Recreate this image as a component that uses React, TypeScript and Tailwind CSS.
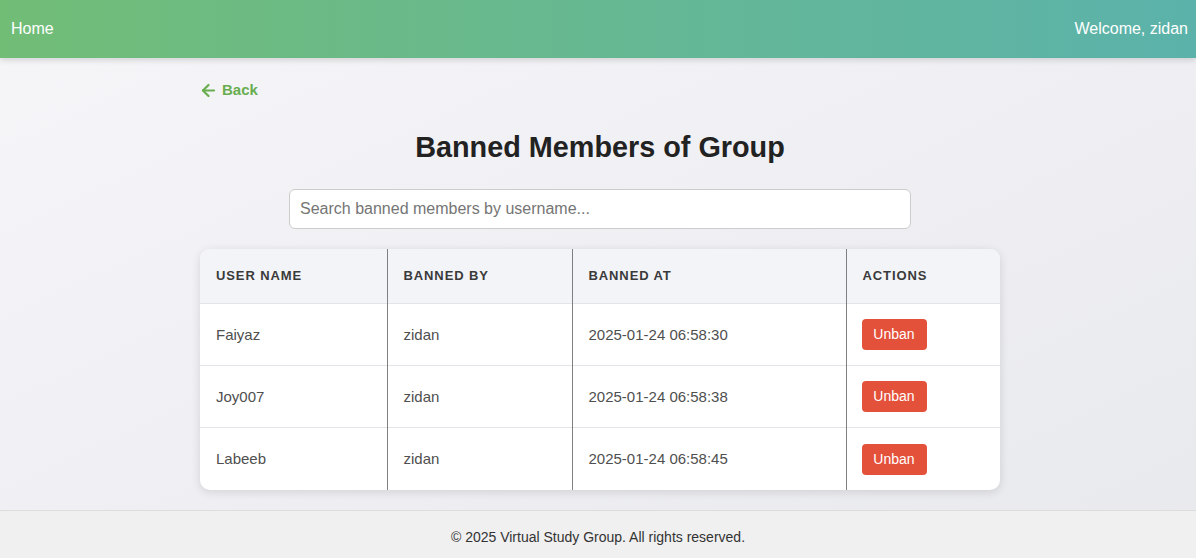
import { ArrowLeft } from 'lucide-react';

const members = [
  { user: 'Faiyaz', by: 'zidan', at: '2025-01-24 06:58:30' },
  { user: 'Joy007', by: 'zidan', at: '2025-01-24 06:58:38' },
  { user: 'Labeeb', by: 'zidan', at: '2025-01-24 06:58:45' },
];

export default function App() {
  return (
    <div className="flex min-h-[558px] flex-col bg-gradient-to-br from-[#f6f6f9] to-[#e8e9ed] font-['Liberation_Sans',Arial,sans-serif] text-[#333]">
      {/* Top bar */}
      <header className="flex h-[58px] items-center justify-between bg-gradient-to-r from-[#71bd76] to-[#5bb2aa] pl-[11px] pr-[8px] text-[16px] text-white shadow-[0_2px_6px_rgba(0,0,0,0.15)]">
        <span>Home</span>
        <span>Welcome, zidan</span>
      </header>

      <main className="flex-1">
        <div className="mx-auto w-[804px] pl-[4px] pt-[21px]">
          <a className="inline-flex items-center gap-[4px] text-[15px] font-bold text-[#68ad4f]">
            <ArrowLeft size={19} strokeWidth={2.75} className="-ml-[1px]" />
            Back
          </a>

          <h1 className="mt-[24px] text-center text-[28.8px] font-bold leading-[32px] text-[#222]">
            Banned Members of Group
          </h1>

          <div className="mt-[26px] flex justify-center">
            <input
              className="h-[40px] w-[622px] rounded-[6px] border border-[#ccc] bg-white px-[10px] text-[16px] outline-none placeholder:text-[#757575]"
              placeholder="Search banned members by username..."
            />
          </div>

          <div className="mt-[20px] overflow-hidden rounded-[10px] bg-white shadow-[0_2px_10px_rgba(0,0,0,0.12)]">
            <table className="w-full border-collapse text-left">
              <colgroup>
                <col className="w-[187px]" />
                <col className="w-[185px]" />
                <col className="w-[274px]" />
                <col />
              </colgroup>
              <thead className="bg-[#f3f4f8]">
                <tr className="h-[55px] border-b border-[#e3e4e8]">
                  {['User Name', 'Banned By', 'Banned At', 'Actions'].map((h, i) => (
                    <th
                      key={h}
                      className={`px-[16px] text-[13px] font-bold uppercase tracking-[0.9px] text-[#3a3a3a] ${i < 3 ? 'border-r border-[#808080]' : ''}`}
                    >
                      {h}
                    </th>
                  ))}
                </tr>
              </thead>
              <tbody>
                {members.map((m, idx) => (
                  <tr
                    key={m.user}
                    className={`h-[62px] text-[15px] text-[#4f4f4f] ${idx < members.length - 1 ? 'border-b border-[#e3e4e8]' : ''}`}
                  >
                    <td className="border-r border-[#808080] px-[16px]">{m.user}</td>
                    <td className="border-r border-[#808080] px-[16px]">{m.by}</td>
                    <td className="border-r border-[#808080] px-[16px]">{m.at}</td>
                    <td className="pl-[15px] pr-[16px]">
                      <button className="h-[31px] w-[65px] rounded-[4px] bg-[#e4513b] text-[14px] text-white">
                        Unban
                      </button>
                    </td>
                  </tr>
                ))}
              </tbody>
            </table>
          </div>
        </div>
      </main>

      <footer className="mt-[20px] flex h-[48px] items-center justify-center border-t border-[#ddd] bg-[#f0f0f0] pt-[6px] text-[14px] text-[#333]">
        © 2025 Virtual Study Group. All rights reserved.
      </footer>
    </div>
  );
}
